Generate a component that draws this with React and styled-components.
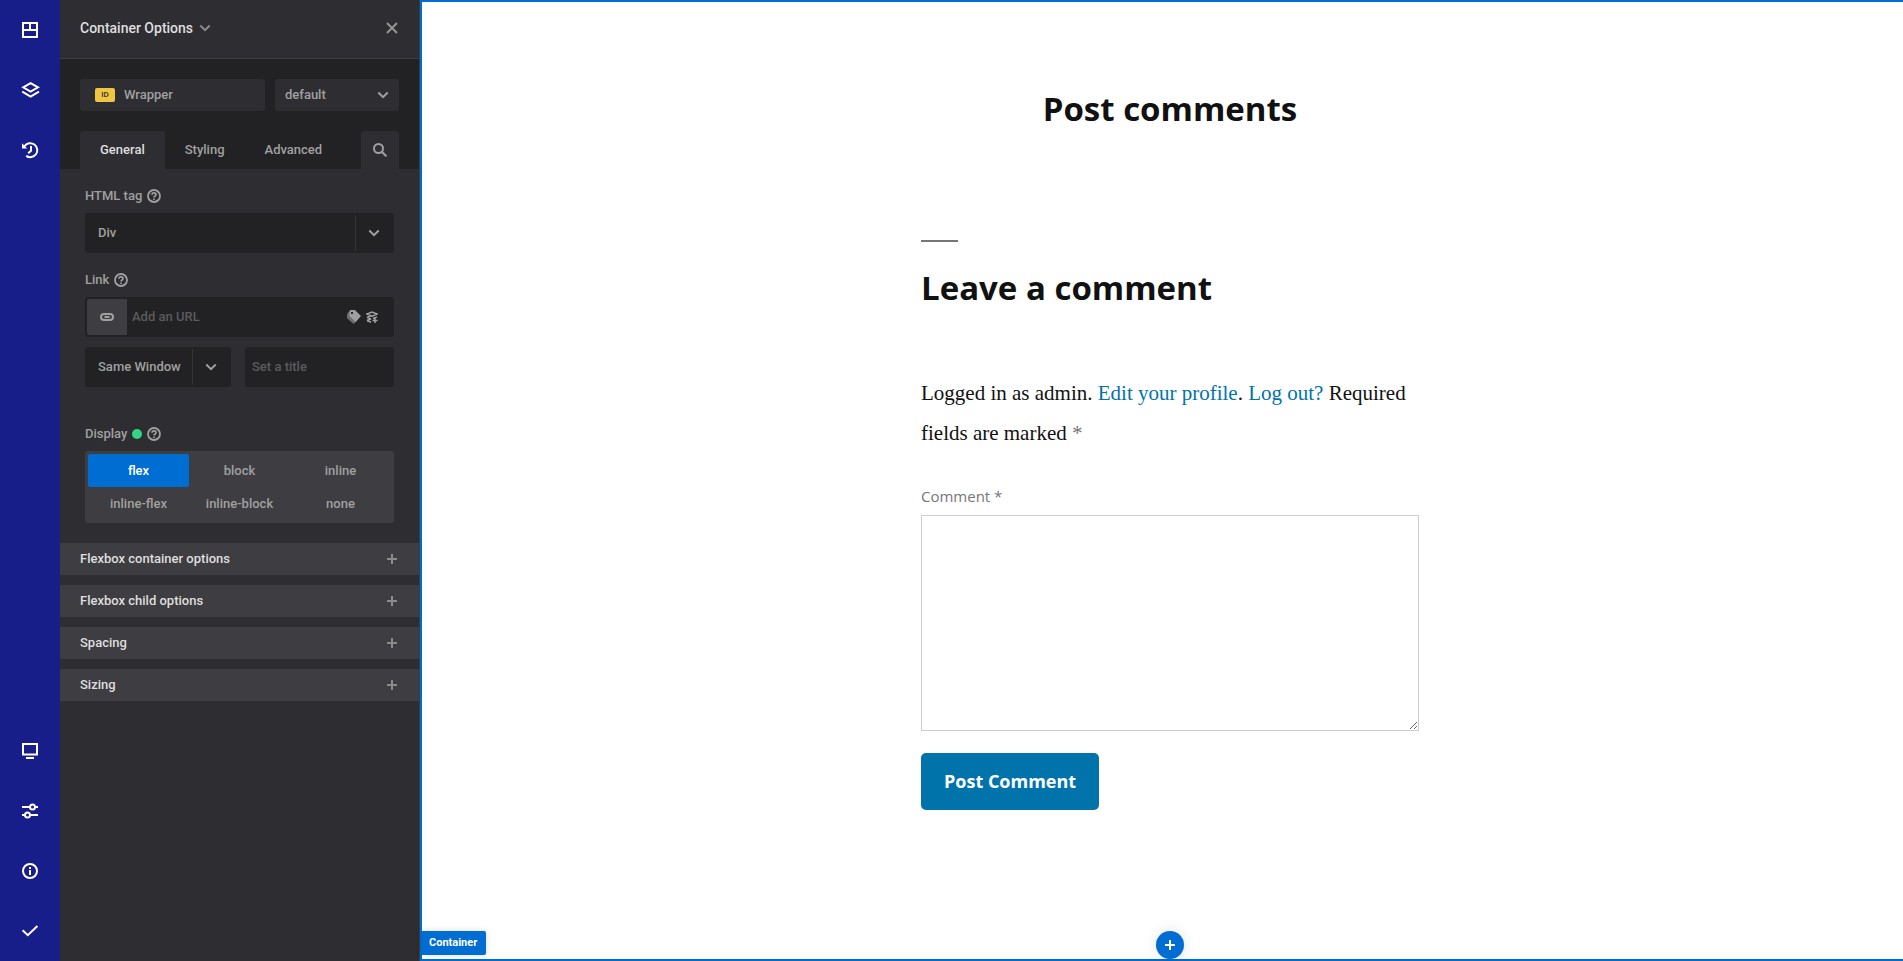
import React from "react";
import styled, { createGlobalStyle, css } from "styled-components";

const GlobalStyle = createGlobalStyle`
  *, *::before, *::after { box-sizing: border-box; }
  body { margin: 0; background: #fff; }
  button, input, select, textarea { font: inherit; color: inherit; margin: 0; border: 0; outline: 0; }
  button { padding: 0; background: none; cursor: pointer; }
  svg { display: block; flex: none; }
`;

const accent = "#006dd2";
const ui = `Roboto, "Liberation Sans", sans-serif`;
const heading = `"Open Sans", "Noto Sans", sans-serif`;

/* Icons */
const Icon = ({ size = 20, stroke = 2, children }) => (
  <svg width={size} height={size} viewBox={`0 0 ${size} ${size}`} fill="none" stroke="currentColor" strokeWidth={stroke} aria-hidden="true">
    {children}
  </svg>
);
const PanelsIcon = () => <Icon><path d="M3 3h14v14H3zM3 10h14M10 3v7" /></Icon>;
const LayersIcon = () => (
  <Icon>
    <path d="M3.2 7.3 10.6 3.1l7.4 4.2-7.4 4.3z" />
    <path d="m2.2 11.6 8.4 4.9 8.4-4.9" />
  </Icon>
);
const HistoryIcon = () => (
  <Icon>
    <path d="M4.6 6.1A7 7 0 1 1 6.2 15.9" />
    <path d="M2 3.2v5.4h5.2z" fill="currentColor" stroke="none" />
    <path d="M11 6v4.8l-2.8 2.4" />
  </Icon>
);
const DesktopIcon = () => <Icon><path d="M3 3h14v10.500H3zM6 17h8" /></Icon>;
const SlidersIcon = () => (
  <Icon>
    <path d="M2 6h8M15 6h3M2 14h3M10 14h8" />
    <circle cx="12.5" cy="6" r="2.5" />
    <circle cx="7.5" cy="14" r="2.5" />
  </Icon>
);
const InfoIcon = () => <Icon><circle cx="10" cy="10" r="7" /><path d="M10 6v2M10 9v5" /></Icon>;
const CheckIcon = () => <Icon><path d="m2.6 9.2 5.2 5L17.4 5" /></Icon>;
const ChevronIcon = () => <Icon size={12}><path d="m1.3 3.5 4.7 4.7 4.7-4.7" /></Icon>;
const CloseIcon = () => <Icon size={12}><path d="m1 1 10 10M11 1 1 11" /></Icon>;
const PlusIcon = () => <Icon size={10}><path d="M5 0v10M0 5h10" /></Icon>;
const SearchIcon = () => <Icon size={14}><circle cx="5.5" cy="5.5" r="4.5" /><path d="m8.8 8.8 4.6 4.6" /></Icon>;
const HelpIcon = () => (
  <Icon size={14}>
    <circle cx="7" cy="7" r="6" strokeWidth="1.8" />
    <path d="M5 5.7C5 3.3 9 3.3 9 5.7 9 7 7 7 7 8.6M7 9.4v1.5" strokeWidth="1.6" />
  </Icon>
);
const LinkIcon = () => (
  <Icon size={14}>
    <rect x="1" y="4" width="12" height="6" rx="3" />
    <path d="M4.5 7h5" />
  </Icon>
);
const TagIcon = () => (
  <Icon size={14} stroke={0}>
    <path d="M2.5 1 0 4v4.200L6.500 14l2.800-2.500z" fill="#6c6c70" />
    <path fillRule="evenodd" d="M2.500 1 3.500 0H8l6 6-5.300 6-6.200-6zM4 2v2h2V2z" fill="currentColor" />
  </Icon>
);
const LibraryIcon = () => (
  <Icon size={12} stroke={1.5}>
    <path d="m1 3 5-2 5 2-5 2.200zM1 6.400l4 1.600M7 7.500l4-1.600M1 9.500l4 1.700" />
    <path d="M9 7v5M6.500 9.500h5" />
    <path d="m1 6.400 4-1.500M1 9.500l4-1.500" />
  </Icon>
);

/* Shell */
const Shell = styled.div`
  display: flex;
  min-height: 100vh;
`;
const Rail = styled.nav`
  flex: none;
  width: 60px;
  display: flex;
  flex-direction: column;
  justify-content: space-between;
  background: #171e8a;
  color: #fff;
`;
const RailButton = styled.button`
  width: 60px;
  height: 60px;
  display: grid;
  place-items: center;
`;

/* Options panel */
const Panel = styled.aside`
  flex: none;
  width: 360px;
  border-right: 1px solid #3b3b40;
  background: #2e2d32;
  color: #a0a0a0;
  font: 500 13px/16px ${ui};
`;
const PanelHeader = styled.header`
  height: 59px;
  padding: 0 21px 2px 20px;
  display: flex;
  align-items: center;
  justify-content: space-between;
  border-bottom: 1px solid #3e3d42;
`;
const PanelTitle = styled.button`
  display: flex;
  align-items: center;
  gap: 6px;
  font-size: 14px;
  color: #dedede;
  svg { color: #8b8b8b; }
`;
const CloseButton = styled.button`
  color: #949494;
`;
const PanelTop = styled.div`
  padding: 20px 20px 0;
  background: #222224;
`;
const SelectorRow = styled.div`
  display: flex;
  gap: 10px;
  margin-bottom: 20px;
`;
const ClassPicker = styled.button`
  flex: 1;
  height: 32px;
  padding: 0 15px;
  display: flex;
  align-items: center;
  gap: 9px;
  border-radius: 3px;
  background: #2e2d32;
`;
const IdBadge = styled.span`
  width: 20px;
  border-radius: 2px;
  background: #eec643;
  color: #2e2d32;
  text-align: center;
  font-size: 8px;
  line-height: 14px;
`;
const SelectFrame = styled.div`
  display: grid;
  grid-template-columns: minmax(0, 1fr) ${(p) => p.$arrow}px;
  flex: ${(p) => (p.$width ? "none" : "1")};
  ${(p) => p.$width && `width: ${p.$width}px;`}
  height: ${(p) => p.$height}px;
  border-radius: 3px;
  background: ${(p) => p.$bg};
  select {
    grid-area: 1 / 1 / 2 / 3;
    appearance: none;
    background: transparent;
    padding: 0 ${(p) => p.$arrow}px 0 ${(p) => p.$pad}px;
    text-overflow: clip;
  }
  > span {
    grid-area: 1 / 2 / 2 / 3;
    margin: 2px 0;
    display: grid;
    place-items: center;
    pointer-events: none;
    ${(p) => p.$divided && css`
      border-left: 1px solid #343338;
      padding-right: 2px;
    `}
  }
`;
const Select = ({ label, id, value, options = [value], ...frame }) => (
  <SelectFrame {...frame}>
    <select id={id} aria-label={label} defaultValue={value}>
      {options.map((o) => <option key={o}>{o}</option>)}
    </select>
    <span><ChevronIcon /></span>
  </SelectFrame>
);
const Tabs = styled.div`
  display: flex;
`;
const Tab = styled.button`
  height: 38px;
  padding: 0 20px;
  border-radius: 3px 3px 0 0;
  background: ${(p) => (p.$active ? "#2e2d32" : "transparent")};
  color: ${(p) => (p.$active ? "#dedede" : "inherit")};
`;
const SearchButton = styled.button`
  width: 38px;
  height: 38px;
  margin-left: auto;
  display: grid;
  place-items: center;
  border-radius: 3px 3px 0 0;
  background: #2e2d32;
`;

/* Form */
const Fields = styled.div`
  padding: 19px 25px 20px;
`;
const Field = styled.div`
  margin-top: ${(p) => p.$space || 0}px;
`;
const FieldLabel = styled.div`
  display: flex;
  align-items: center;
  gap: 5px;
  margin-bottom: 9px;
`;
const ChangedDot = styled.span`
  width: 10px;
  height: 10px;
  border-radius: 50%;
  background: #32d583;
`;
const UrlBox = styled.div`
  height: 40px;
  padding: 2px 16px 2px 2px;
  display: flex;
  align-items: center;
  gap: 5px;
  border-radius: 3px;
  background: #222224;
`;
const LinkButton = styled.button`
  flex: none;
  width: 40px;
  height: 36px;
  display: grid;
  place-items: center;
  border-radius: 2px 0 0 2px;
  background: #3e3d42;
`;
const TextInput = styled.input`
  flex: 1;
  min-width: 0;
  height: ${(p) => (p.$boxed ? 40 : 36)}px;
  padding: 0 ${(p) => (p.$boxed ? 7 : 0)}px 2px;
  border-radius: 3px;
  background: ${(p) => (p.$boxed ? "#222224" : "transparent")};
  &::placeholder { color: #5b5b5e; opacity: 1; }
`;
const LinkRow = styled.div`
  display: flex;
  gap: 14px;
  margin-top: 10px;
`;
const ChoiceGrid = styled.div`
  display: grid;
  grid-template-columns: repeat(3, 1fr);
  padding: 3px;
  border-radius: 3px;
  background: #3e3d42;
`;
const Choice = styled.label`
  height: 33px;
  display: flex;
  align-items: center;
  justify-content: center;
  border-radius: 2px;
  cursor: pointer;
  input { appearance: none; width: 0; height: 0; }
  &:has(input:checked) { background: ${accent}; color: #fff; }
`;
const Sections = styled.div`
  display: grid;
  gap: 10px;
`;
const SectionButton = styled.button`
  height: 32px;
  padding: 0 22px 0 20px;
  display: flex;
  align-items: center;
  justify-content: space-between;
  background: #3e3d42;
  color: #dedede;
  svg { color: #8b8b8b; }
`;

/* Canvas */
const Canvas = styled.main`
  position: relative;
  flex: 1;
  min-width: 0;
  display: flex;
  flex-direction: column;
  align-items: center;
  padding-left: 15px;
  border: 2px solid ${accent};
  border-right: 0;
  color: #111;
`;
const PageTitle = styled.h1`
  margin: 83px 0 0;
  text-align: center;
  font: 700 33px/48px ${heading};
`;
const CommentForm = styled.form`
  width: 100%;
  max-width: 498px;
  margin: 107px 0 auto;
`;
const FormTitle = styled.h2`
  margin: 0;
  font: 700 33px/48px ${heading};
  &::before {
    content: "";
    display: block;
    width: 37px;
    height: 2px;
    margin-bottom: 22px;
    background: #767676;
  }
`;
const Notes = styled.p`
  margin: 61px 0 31px;
  font: 21px/40px "Liberation Serif", serif;
  a { color: #0073aa; text-decoration: none; }
  span { color: #767676; }
`;
const CommentLabel = styled.label`
  display: block;
  margin-bottom: 7px;
  color: #767676;
  font: 15px/24px ${heading};
`;
const CommentBox = styled.textarea`
  display: block;
  width: 100%;
  height: 216px;
  border: 1px solid #ccc;
  background: #fff;
`;
const SubmitButton = styled.button`
  margin-top: 22px;
  padding: 0 23px;
  border-radius: 5px;
  background: #0073aa;
  color: #fff;
  font: 700 18px/57px ${heading};
`;
const ElementTag = styled.span`
  position: absolute;
  left: 0;
  bottom: 4px;
  padding: 0 9px 0 7px;
  border-radius: 0 2px 2px 0;
  background: ${accent};
  color: #fff;
  font: 700 11px/24px ${ui};
  box-shadow: 0 0 6px rgba(0, 0, 0, 0.15);
`;
const AddButton = styled.button`
  width: 28px;
  height: 28px;
  display: grid;
  place-items: center;
  border-radius: 50%;
  background: ${accent};
  color: #fff;
  box-shadow: 0 0 14px rgba(0, 0, 0, 0.12);
`;

const topTools = [["Panels", PanelsIcon], ["Tree view", LayersIcon], ["History", HistoryIcon]];
const bottomTools = [["Devices", DesktopIcon], ["Page options", SlidersIcon], ["Info", InfoIcon], ["Save", CheckIcon]];
const displays = ["flex", "block", "inline", "inline-flex", "inline-block", "none"];
const sections = ["Flexbox container options", "Flexbox child options", "Spacing", "Sizing"];

const Tools = ({ items }) => (
  <div>
    {items.map(([name, Glyph]) => (
      <RailButton key={name} type="button" aria-label={name}><Glyph /></RailButton>
    ))}
  </div>
);

export default function App() {
  return (
    <>
      <GlobalStyle />
      <Shell>
        <Rail>
          <Tools items={topTools} />
          <Tools items={bottomTools} />
        </Rail>
        <Panel>
          <PanelHeader>
            <PanelTitle type="button">Container Options <ChevronIcon /></PanelTitle>
            <CloseButton type="button" aria-label="Close"><CloseIcon /></CloseButton>
          </PanelHeader>
          <PanelTop>
            <SelectorRow>
              <ClassPicker type="button"><IdBadge>ID</IdBadge>Wrapper</ClassPicker>
              <Select label="State" value="default" $width={124} $height={32} $bg="#2e2d32" $pad={10} $arrow={32} />
            </SelectorRow>
            <Tabs>
              <Tab type="button" $active>General</Tab>
              <Tab type="button">Styling</Tab>
              <Tab type="button">Advanced</Tab>
              <SearchButton type="button" aria-label="Search options"><SearchIcon /></SearchButton>
            </Tabs>
          </PanelTop>
          <Fields>
            <Field>
              <FieldLabel><label htmlFor="tag">HTML tag</label><HelpIcon /></FieldLabel>
              <Select id="tag" value="Div" $height={40} $bg="#222224" $pad={13} $arrow={39} $divided />
            </Field>
            <Field $space={19}>
              <FieldLabel><label htmlFor="url">Link</label><HelpIcon /></FieldLabel>
              <UrlBox>
                <LinkButton type="button" aria-label="Choose link"><LinkIcon /></LinkButton>
                <TextInput id="url" placeholder="Add an URL" />
                <TagIcon />
                <LibraryIcon />
              </UrlBox>
              <LinkRow>
                <Select label="Link target" value="Same Window" $width={146} $height={40} $bg="#222224" $pad={13} $arrow={39} $divided />
                <TextInput $boxed placeholder="Set a title" aria-label="Link title" />
              </LinkRow>
            </Field>
            <Field $space={39}>
              <FieldLabel><span id="display-label">Display</span><ChangedDot /><HelpIcon /></FieldLabel>
              <ChoiceGrid role="radiogroup" aria-labelledby="display-label">
                {displays.map((d) => (
                  <Choice key={d}>
                    <input type="radio" name="display" value={d} defaultChecked={d === "flex"} />
                    {d}
                  </Choice>
                ))}
              </ChoiceGrid>
            </Field>
          </Fields>
          <Sections>
            {sections.map((s) => (
              <SectionButton key={s} type="button">{s}<PlusIcon /></SectionButton>
            ))}
          </Sections>
        </Panel>
        <Canvas>
          <PageTitle>Post comments</PageTitle>
          <CommentForm>
            <FormTitle>Leave a comment</FormTitle>
            <Notes>
              Logged in as admin. <a href="#profile">Edit your profile</a>. <a href="#logout">Log out?</a> Required fields are marked <span>*</span>
            </Notes>
            <CommentLabel htmlFor="comment">Comment *</CommentLabel>
            <CommentBox id="comment" />
            <SubmitButton type="button">Post Comment</SubmitButton>
          </CommentForm>
          <ElementTag>Container</ElementTag>
          <AddButton type="button" aria-label="Add element"><PlusIcon /></AddButton>
        </Canvas>
      </Shell>
    </>
  );
}
